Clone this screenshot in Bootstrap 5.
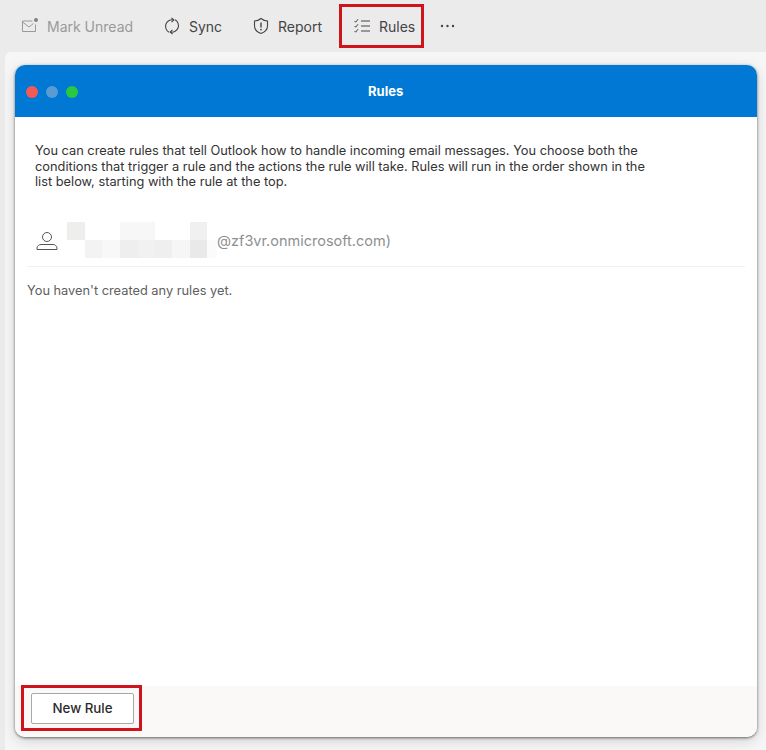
<!DOCTYPE html>
<html lang="en"><head><meta charset="utf-8"><title>Rules</title>
<link href="https://cdn.jsdelivr.net/npm/bootstrap@5.3.0/dist/css/bootstrap.min.css" rel="stylesheet">
<style>
html,body{height:750px;overflow:hidden}
body{background:#ebebeb;font-family:Inter,"Liberation Sans",sans-serif;color:#2b2b2b}
.toolbar{height:52px;padding-left:21px;color:#444;font-size:14px}
.tool{gap:8px;white-space:nowrap}
.tool svg{width:18px;height:18px;flex:none}
.t-mark{color:#9a9a9a;width:142px}
.t-sync{width:89px}
.t-report{width:87px}
.t-rules{width:85px;height:44px;border:3px solid #d0141c;padding-left:11px}
.t-more{margin-left:16px}
.panel{height:698px;margin-left:5px;background:#f6f6f6;border-radius:6px 0 0 0;padding:13px 9px 0 10px}
.win{height:672px;border-radius:10px;overflow:hidden;background:#fff;box-shadow:0 1px 3px rgba(0,0,0,.55),0 4px 14px rgba(0,0,0,.14)}
.win-head{height:52px;background:#0078d4;color:#fff;font-size:13px;font-weight:700;padding:1px 0 0 11px}
.lights{gap:8px;width:52px}
.lights i{width:12px;height:12px;border-radius:50%;display:block}
.win-title{margin-left:290px}
.win-body{padding:26px 12px 0}
.intro{font-size:12.8px;line-height:15.7px;margin:0 85px 0 8px;color:#333}
.account{height:51px;margin-top:26px;border-bottom:1px solid #f0f0f0;padding-left:9px;font-size:14.5px;color:#8f8f8f}
.account .person{width:22px;height:20px;flex:none}
.blur{width:150px;height:36px;margin:0 0 2px 9px;flex:none}
.empty{font-size:12.8px;color:#606060;margin-top:14px}
.win-foot{height:51px;background:#faf9f8;padding-left:6px}
.callout{width:121px;height:46px;margin-top:-1px;border:3px solid #d0141c;padding:5px 0 0 7px}
.new-rule{width:103px;height:31px;font-size:13.3px;font-weight:500;color:#2b2b2b;background:#fff;border:1px solid #a8a8a8;border-radius:2px;padding:0}
</style></head>
<body>
<div class="toolbar d-flex align-items-center">
  <div class="tool t-mark d-flex align-items-center"><svg viewBox="0 0 18 18" fill="none" stroke="#9a9a9a" stroke-width="1"><path d="M11.500 4H1.500v10.500h13V7.500"/><path d="M1.500 5l6.500 5 4.500-3.500"/><circle cx="15" cy="3" r="2" fill="#808080" stroke="none"/></svg><span>Mark Unread</span></div>
  <div class="tool t-sync d-flex align-items-center"><svg viewBox="0 0 18 18" fill="none" stroke="#444" stroke-width="1.100"><path d="M10.800 3A6.600 6.600 0 0 0 6 15.200"/><path d="M7.200 15A6.600 6.600 0 0 0 12 2.800"/><path d="M8.500 .8 10.800 3 8.500 5.200M9.500 12.800 7.200 15 9.500 17.200"/></svg><span>Sync</span></div>
  <div class="tool t-report d-flex align-items-center"><svg viewBox="0 0 18 18" fill="none" stroke="#444" stroke-width="1.100"><path d="M9 1.500c2 1.600 4 2.400 6.500 2.500v5c0 3.600-2.600 6-6.500 7.500-3.900-1.500-6.500-3.900-6.500-7.500V4C5 3.900 7 3.100 9 1.500z"/><path d="M9 5.500v5" stroke-width="1.400"/><circle cx="9" cy="12.600" r=".9" fill="#444" stroke="none"/></svg><span>Report</span></div>
  <div class="tool t-rules d-flex align-items-center"><svg viewBox="0 0 18 18" fill="none" stroke="#444" stroke-width="1"><path d="M8 4h9M8 9h9M8 14h9"/><path d="M1.500 4l1.200 1.200L5 2.200M1.500 9l1.200 1.200L5 7.200M1.500 14l1.200 1.200 2.300-3"/></svg><span>Rules</span></div>
  <div class="t-more d-flex align-items-center"><svg width="15" height="4" viewBox="0 0 15 4" fill="#444"><circle cx="2" cy="2" r="1.200"/><circle cx="7.500" cy="2" r="1.200"/><circle cx="13" cy="2" r="1.200"/></svg></div>
</div>
<div class="panel">
  <div class="win d-flex flex-column">
    <div class="win-head d-flex align-items-center flex-none">
      <div class="lights d-flex"><i style="background:#f25b55"></i><i style="background:#5b9bd5"></i><i style="background:#28c840"></i></div>
      <div class="win-title">Rules</div>
    </div>
    <div class="win-body flex-grow-1">
      <p class="intro">You can create rules that tell Outlook how to handle incoming email messages. You choose both the conditions that trigger a rule and the actions the rule will take. Rules will run in the order shown in the list below, starting with the rule at the top.</p>
      <div class="account d-flex align-items-center">
        <svg class="person" viewBox="0 0 22 20" fill="none" stroke="#555" stroke-width="1"><circle cx="11" cy="6" r="4.500"/><path d="M1 18.500v-1.500c0-2 2-3.500 4-3.500h12c2 0 4 1.500 4 3.500v1.500z"/></svg>
        <svg class="blur" viewBox="0 0 150 36" aria-hidden="true"><rect x="0" y="0" width="18" height="18" fill="#eeeeec"/><rect x="53" y="0" width="35" height="18" fill="#f7f7f7"/><rect x="123" y="0" width="17" height="18" fill="#f0f0f0"/><rect x="18" y="18" width="17" height="18" fill="#f3f3f3"/><rect x="35" y="18" width="18" height="18" fill="#f8f8f8"/><rect x="53" y="18" width="18" height="18" fill="#eeeeee"/><rect x="71" y="18" width="17" height="18" fill="#f1f1f1"/><rect x="88" y="18" width="17" height="18" fill="#efefef"/><rect x="105" y="18" width="18" height="18" fill="#f6f6f6"/><rect x="123" y="18" width="17" height="18" fill="#e9e9e9"/><rect x="140" y="18" width="10" height="18" fill="#fbfbfb"/></svg>
        <span>@zf3vr.onmicrosoft.com)</span>
      </div>
      <div class="empty">You haven't created any rules yet.</div>
    </div>
    <div class="win-foot flex-none"><div class="callout"><button type="button" class="btn new-rule d-block">New Rule</button></div></div>
  </div>
</div>
<script src="https://cdn.jsdelivr.net/npm/bootstrap@5.3.0/dist/js/bootstrap.bundle.min.js"></script>
</body></html>
